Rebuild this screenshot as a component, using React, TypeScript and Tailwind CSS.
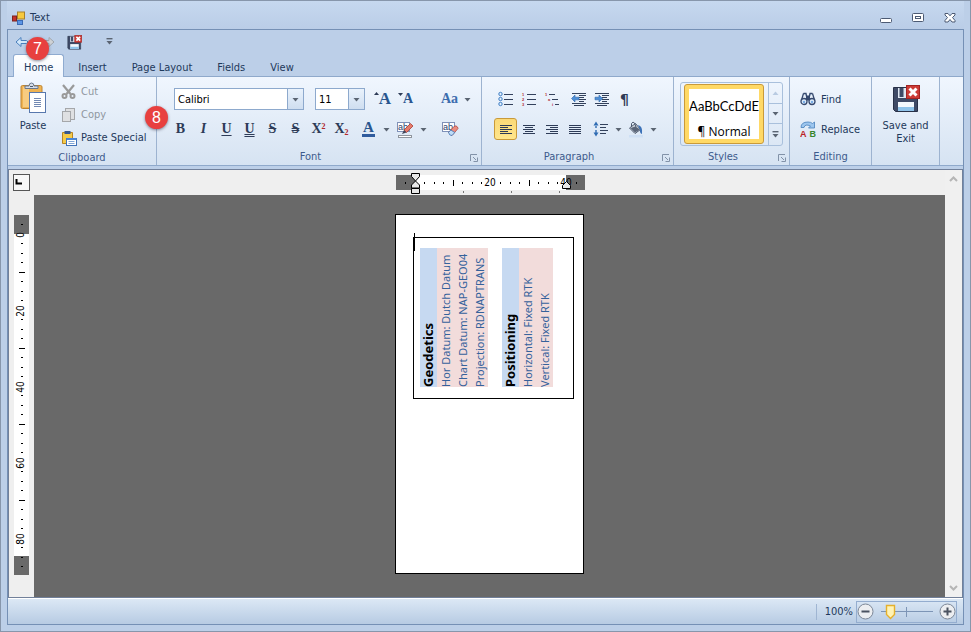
import React, { useState } from 'react';

const Caret: React.FC<{ up?: boolean; bar?: boolean; faint?: boolean }> = ({ up, bar, faint }) => (
  <svg width="7" height="8" viewBox="0 0 7 8" fill={faint ? '#b9cbe2' : '#5a6472'}>
    {bar && <path d="M0.5 0h6v1.4h-6z" />}
    <path d={up ? 'M0.5 6h6L3.5 2.5z' : 'M0.5 3h6L3.5 6.5z'} />
  </svg>
);

const AppIcon = () => (
  <svg width="14" height="14" viewBox="0 0 14 14">
    <rect x="5.5" y="1" width="7" height="7" fill="#f7c93e" stroke="#a9802a" />
    <rect x="0.5" y="5" width="4" height="5" fill="#c5322b" stroke="#7d2321" />
    <rect x="5.5" y="9.5" width="5" height="4" fill="#5c95e6" stroke="#3b6bb5" />
  </svg>
);

const HistoryArrow: React.FC<{ redo?: boolean }> = ({ redo }) => (
  <svg width="14" height="12" viewBox="0 0 14 12">
    <path
      d={redo ? 'M13 6L8 1.5v3H2.5L1 6l1.5 1.5H8v3z' : 'M1 6l5-4.5v3h5.5L13 6l-1.5 1.5H6v3z'}
      fill={redo ? '#cfd2d6' : '#d3e8fb'}
      stroke={redo ? '#9fa5ad' : '#4a80bd'}
    />
  </svg>
);

const SaveExitIcon: React.FC<{ size: number }> = ({ size }) => (
  <svg width={size} height={size} viewBox="0 0 28 28">
    <path d="M1.5 2.5h24v24h-22l-2-2z" fill="#3e4a66" stroke="#283148" />
    <rect x="6" y="3" width="13" height="10" fill="#dfe8f3" />
    <rect x="7.5" y="3" width="4" height="9" fill="#3e4a66" />
    <rect x="6" y="17" width="16" height="9" fill="#f3f8fd" />
    <rect x="6" y="22" width="16" height="4" fill="#8fc3ea" />
    <rect x="14.5" y="0.5" width="13" height="13" fill="#cc3b36" stroke="#a32422" />
    <path d="M17.5 3.5l7 7M24.5 3.5l-7 7" stroke="#fff" strokeWidth="3" />
  </svg>
);

const PasteIcon = () => (
  <svg width="26" height="32" viewBox="0 0 26 32">
    <rect x="1" y="3.5" width="21" height="23" rx="1.5" fill="#efb352" stroke="#bf8430" />
    <rect x="3" y="5" width="6" height="20" fill="#f8cc80" />
    <path d="M5 6.5V4h4a2.5 3 0 0 1 5 0h4v2.5z" fill="#d5dde8" stroke="#69778c" />
    <path d="M10 4.5h3" stroke="#4a576b" />
    <rect x="9.5" y="10.5" width="16" height="20" fill="#fff" stroke="#5878ad" />
    <path d="M14 16.5h7M14 18.5h7M14 20.5h7M14 22.5h7M14 24.5h7" stroke="#7289b3" />
  </svg>
);

const CutIcon = () => (
  <svg width="15" height="15" viewBox="0 0 15 15" fill="none" stroke="#999">
    <path d="M2 1l7.5 9M13 1L5.5 10" strokeWidth="2.2" />
    <circle cx="3.5" cy="12" r="2" strokeWidth="2" />
    <circle cx="11.5" cy="12" r="2" strokeWidth="2" />
  </svg>
);

const CopyIcon = () => (
  <svg width="15" height="16" viewBox="0 0 15 16" fill="#dfe0e2" stroke="#a5a7aa">
    <rect x="4.5" y="1.5" width="9" height="11" />
    <rect x="1.5" y="4.5" width="8" height="10" />
  </svg>
);

const PasteSpecialIcon = () => (
  <svg width="16" height="16" viewBox="0 0 16 16">
    <path d="M1.5 2.5h10v11h-10z" fill="#f5cb48" stroke="#b88521" />
    <path d="M3.5 1h6v3h-6z" fill="#36588f" />
    <rect x="5.5" y="8.5" width="10" height="7" fill="#fff" stroke="#4272b8" />
    <path d="M5.5 9h10" stroke="#4b86d6" strokeWidth="2" />
    <path d="M7.5 11.5h6M7.5 13.5h6" stroke="#7fa5d6" />
  </svg>
);

const ListIcon: React.FC<{ kind: 'bullet' | 'number' | 'multi' }> = ({ kind }) => (
  <svg width="16" height="16" viewBox="0 0 16 16" fontFamily="Liberation Sans" fontWeight="bold" fontSize="4" fill="#b0282a">
    {kind === 'multi' ? (
      <>
        <path d="M5 3.5h6M8 8.5h6M11 13.5h4" stroke="#33415c" />
        <text x="1" y="5">1</text>
        <text x="4" y="10">a</text>
        <text x="8" y="15">i</text>
      </>
    ) : (
      <>
        <path d="M6 3.5h9M6 8.5h9M6 13.5h9" stroke="#33415c" />
        {[3, 8, 13].map((y, i) =>
          kind === 'bullet' ? (
            <circle key={y} cx="2.5" cy={y} r="1.7" fill="#e4f1fd" stroke="#3d7dc4" />
          ) : (
            <text key={y} x="1" y={y + 2}>{i + 1}</text>
          )
        )}
      </>
    )}
  </svg>
);

const IndentIcon: React.FC<{ more?: boolean }> = ({ more }) => (
  <svg width="16" height="14" viewBox="0 0 16 14">
    <path d="M1 1.5h14M8 3.5h7M8 5.5h5M8 7.5h7M8 9.5h5M1 11.5h14M3 13.5h10" stroke="#33415c" />
    <path d={more ? 'M8.5 6.5L5 3v2.2H1v2.6h4V10z' : 'M0.5 6.5L4 3v2.2h4v2.6H4V10z'} fill="#4d8fd8" stroke="#2c65a8" strokeWidth="0.6" />
  </svg>
);

const alignPaths: Record<string, string> = {
  Left: 'M1 1.5h12M1 3.5h8M1 5.5h12M1 7.5h8M1 9.5h12',
  Center: 'M1 1.5h12M3 3.5h8M1 5.5h12M3 7.5h8M1 9.5h12',
  Right: 'M1 1.5h12M5 3.5h8M1 5.5h12M5 7.5h8M1 9.5h12',
  Justify: 'M1 1.5h12M1 3.5h12M1 5.5h12M1 7.5h12M1 9.5h12',
};

const SpacingIcon = () => (
  <svg width="16" height="16" viewBox="0 0 16 16">
    <path d="M7 3.5h8M7 6.5h6M7 9.5h8M7 12.5h6" stroke="#33415c" />
    <path d="M3 0.5L0.5 4.5h5zM3 15.5l-2.5-4h5zM2.3 4h1.4v3H2.3zM2.3 9h1.4v3H2.3z" fill="#2f6cb3" />
  </svg>
);

const BucketIcon = () => (
  <svg width="16" height="17" viewBox="0 0 16 17">
    <path d="M1 14h14v2.5H1z" fill="#cfe0f5" />
    <path d="M1.5 7L7.5 2.5l5 6L7 12.5z" fill="#cdd3db" stroke="#4e5a6e" />
    <path d="M2.5 7l5-1.5 4.5 3L7 11.5z" fill="#5a6578" />
    <path d="M3.5 5V2.5Q5 0 6.5 2L8 6" fill="none" stroke="#4e5a6e" />
    <path d="M10 4q5 1 4 9-2.5-1-2-4z" fill="#3d72b8" />
  </svg>
);

const FindIcon = () => (
  <svg width="16" height="14" viewBox="0 0 16 14" fill="#d6e7f8" stroke="#36496e">
    <path d="M3.5 1.5h2.5l1 5M12.5 1.5H10l-1 5M3.5 1.5L1.5 8M12.5 1.5l2 6.5" strokeWidth="1.3" />
    <path d="M6.5 4h3v4h-3z" fill="#36496e" />
    <circle cx="4" cy="9.5" r="3" strokeWidth="1.3" />
    <circle cx="12" cy="9.5" r="3" strokeWidth="1.3" />
    <path d="M4 9v2M12 9v2" stroke="#5b9be0" strokeWidth="1.5" />
  </svg>
);

const ReplaceIcon = () => (
  <svg width="16" height="16" viewBox="0 0 16 16" fontFamily="Liberation Sans" fontWeight="bold" fontSize="9">
    <path d="M1 6.5q0-5.5 7-5.5 3 0 4.5 1.5L14.5 1v6h-6l2-2Q5 2.5 4 6.5z" fill="#9cc5ee" stroke="#4880bb" strokeWidth="0.8" />
    <text x="0" y="15.5" fill="#bb2126">A</text>
    <text x="9.5" y="15.5" fill="#38852d">B</text>
  </svg>
);

const AbIcon: React.FC<{ eraser?: boolean }> = ({ eraser }) => (
  <svg width="17" height="17" viewBox="0 0 17 17">
    <rect x="0.5" y="1.5" width="12" height="9" fill="#fff" stroke="#7f91b8" />
    <text x="1" y="9" fontFamily="Liberation Sans" fontSize="9" fontWeight="normal" fill="#27406e">ab</text>
    {eraser ? (
      <>
        <path d="M6.5 11.5l5.5-6q2-1.5 3.5.5l.5 1.5-6 7z" fill="#eb8d80" stroke="#b14a42" strokeWidth="0.8" />
        <path d="M6.5 11.5l2.3-2.5 4 2.5-2.8 3q-2.5.5-3.5-3z" fill="#bfdcf7" stroke="#3f75b5" strokeWidth="0.8" />
      </>
    ) : (
      <>
        <path d="M7 9l6.5-6.5 2.5 2.5-6.5 6.5z" fill="#e67a6a" stroke="#a83e35" strokeWidth="0.8" />
        <path d="M7 9l2.5 2.5-4.5 1.5z" fill="#41475a" />
        <rect x="1.5" y="14.5" width="13" height="2" fill="#fff" stroke="#8f959e" />
      </>
    )}
  </svg>
);

const Tool: React.FC<{ label: string; active?: boolean; onClick?: () => void; children: React.ReactNode }> = ({ label, active, onClick, children }) => (
  <button
    aria-label={label}
    onClick={onClick}
    className={`flex h-[22px] w-[23px] shrink-0 items-center justify-center rounded-[3px] border font-[Liberation_Serif,serif] text-[14px] leading-4 font-bold text-[#2d3b57] ${
      active ? 'border-[#c99a3a] bg-gradient-to-b from-[#fbd977] to-[#ffe68c]' : 'border-transparent'
    }`}
  >
    {children}
  </button>
);

const MoreButton: React.FC<{ label: string }> = ({ label }) => (
  <button aria-label={label} className="flex h-[22px] w-3 shrink-0 items-center justify-center">
    <Caret />
  </button>
);

const Combo: React.FC<{ label: string; value: string; options: string[]; className: string }> = ({ label, value, options, className }) => (
  <div className={`relative h-[22px] border border-[#8da9cd] bg-white ${className}`}>
    <select aria-label={label} defaultValue={value} className="h-full w-full appearance-none bg-transparent pl-[3px] text-black outline-none">
      {options.map((o) => <option key={o}>{o}</option>)}
    </select>
    <span className="pointer-events-none absolute inset-y-0 right-0 flex w-4 items-center justify-center border-l border-[#8da9cd] bg-gradient-to-b from-[#e9f2fc] to-[#cfdef0]">
      <Caret />
    </span>
  </div>
);

const Group: React.FC<{ title?: string; launcher?: boolean; className: string; children?: React.ReactNode }> = ({ title, launcher, className, children }) => (
  <section className={`flex shrink-0 flex-col border-r border-[#9db3d0] ${className}`}>
    <div className="flex-1">{children}</div>
    {title && (
      <div className={`relative h-[17px] text-center leading-[18px] text-[#3d5a8c] ${launcher ? 'pr-[17px]' : ''}`}>
        {title}
        {launcher && (
          <button aria-label={`${title} settings`} className="absolute right-[3px] bottom-[3px]">
            <svg width="8" height="8" viewBox="0 0 8 8" fill="none" stroke="#8292a8" className="block">
              <path d="M0.5 7V0.5H7M3 3l3 3M7.5 3.5v4h-4" />
            </svg>
          </button>
        )}
      </div>
    )}
  </section>
);

const STEP = 9.5;

const Ruler: React.FC<{ length: number; last: number; vertical?: boolean }> = ({ length, last, vertical }) => {
  const ticks = Array.from({ length: last + 2 }, (_, i) => i - 1);
  const w = vertical ? 15 : length;
  const h = vertical ? length : 18;
  return (
    <svg width={w} height={h} viewBox={`0 0 ${w} ${h}`} className="shrink-0" fontFamily="DejaVu Sans Condensed, Noto Sans, sans-serif" fontSize="10" textAnchor="middle">
      <g transform={vertical ? 'matrix(0 1 1 0 0 0)' : undefined}>
        <rect width={length} height="15" fill="#fff" />
        <rect width="19" height="15" fill="#696969" />
        <rect x={length - 19} width="19" height="15" fill="#696969" />
        {ticks.filter((k) => k % 8 !== 0).map((k) => (
          <rect key={k} x={Math.floor(19 + k * STEP)} y={k % 4 === 0 ? 5 : 7} width="1" height={k % 4 === 0 ? 6 : 2} fill="#000" />
        ))}
      </g>
      {/* default tab stops */}
      {!vertical && [67, 115, 163].map((x) => <rect key={x} x={x} y="16" width="1" height="2" fill="#777" />)}
      {ticks.filter((k) => k % 8 === 0 && (vertical || k > 0)).map((k) => {
        const p = 19 + k * STEP;
        return vertical ? (
          <text key={k} transform={`translate(10 ${p + 1}) rotate(-90)`}>{k * 2.5}</text>
        ) : (
          <text key={k} x={p - 1} y="11">{k * 2.5}</text>
        );
      })}
    </svg>
  );
};

const IndentMarkers = () => (
  <svg width="189" height="22" viewBox="0 0 189 22" className="pointer-events-none absolute top-[3px] left-0" fill="#e8e8e8" stroke="#000">
    <path d="M15.5 0.5h8v3l-4 4.5 4 4v3h-8v-3l4-4-4-4.5zM15.5 15.5h8v5h-8z" />
    <path d="M166.5 15.5v-3l4-4 4 4v3z" />
  </svg>
);

const blocks = [
  { title: 'Geodetics', lines: ['Hor Datum: Dutch Datum', 'Chart Datum: NAP-GEO04', 'Projection: RDNAPTRANS'] },
  { title: 'Positioning', lines: ['Horizontal: Fixed RTK', 'Vertical: Fixed RTK'] },
];

const Callout: React.FC<{ className: string; children: React.ReactNode }> = ({ className, children }) => (
  <span className={`absolute z-10 flex size-[23px] items-center justify-center rounded-full bg-[#e8403f] font-[Liberation_Sans,sans-serif] text-base text-white shadow-[0_1px_3px_rgba(60,60,80,0.6)] ${className}`}>
    {children}
  </span>
);

const tabs = ['Home', 'Insert', 'Page Layout', 'Fields', 'View'];

export default function App() {
  const [tab, setTab] = useState('Home');
  const [align, setAlign] = useState('Left');

  return (
    <div className="relative flex h-screen min-h-[400px] flex-col overflow-hidden border border-[#8796ab] bg-[#bccfe8] px-[6px] pb-[6px] font-[DejaVu_Sans_Condensed,Noto_Sans,sans-serif] text-[11px] leading-[13px] text-[#1e395b]">
      <header className="flex h-7 shrink-0 items-center bg-gradient-to-b from-[#c6d8ef] to-[#bacde7] pt-[5px] pr-[7px] pl-[5px]">
        <AppIcon />
        <h1 className="ml-1 flex-1">Text</h1>
        <div className="flex items-center gap-[18px]">
          <button aria-label="Minimize">
            <svg width="14" height="14" viewBox="0 0 14 14"><rect x="1.5" y="7.5" width="11" height="4" rx="1" fill="#fff" stroke="#4c5a73" /></svg>
          </button>
          <button aria-label="Maximize">
            <svg width="14" height="14" viewBox="0 0 14 14" fill="#fff" stroke="#4c5a73"><rect x="1.5" y="2.5" width="11" height="8" rx="1" /><rect x="4.5" y="5.5" width="5" height="2" /></svg>
          </button>
          <button aria-label="Close">
            <svg width="14" height="14" viewBox="0 0 14 14"><path d="M2 2.5h3l2 2.3 2-2.3h3v1.5L9.5 6.5 12 9.5V11H9L7 8.5 5 11H2V9.5l2.5-3L2 4z" fill="#fff" stroke="#4c5a73" /></svg>
          </button>
        </div>
      </header>

      <div className="flex min-h-0 flex-1 flex-col border border-[#7590b5]">
        <div className="flex h-6 shrink-0 items-center pl-[7px]">
          <button aria-label="Undo"><HistoryArrow /></button>
          <button aria-label="Redo" className="ml-3"><HistoryArrow redo /></button>
          <button aria-label="Save and exit" className="ml-3"><SaveExitIcon size={15} /></button>
          <button aria-label="Customize toolbar" className="ml-6"><Caret bar /></button>
        </div>

        <nav role="tablist" className="flex h-[22px] shrink-0 gap-[3px] pl-[5px]">
          {tabs.map((t) => (
            <button
              key={t}
              role="tab"
              aria-selected={t === tab}
              onClick={() => setTab(t)}
              className={`relative -mb-px rounded-t-[3px] border border-b-0 px-[10px] pt-[2px] ${
                t === tab ? 'z-[1] border-[#8fabd0] bg-gradient-to-b from-white to-[#f0f6fe]' : 'border-transparent'
              }`}
            >
              {t}
            </button>
          ))}
        </nav>

        <div className="flex h-[90px] shrink-0 overflow-hidden border-y border-[#8fa9cb] bg-gradient-to-b from-[#f0f6fe] to-[#d6e3f2]">
          <Group title="Clipboard" className="w-[149px]">
            <div className="flex pt-[3px] pl-[9px]">
              <button className="flex w-8 flex-col items-center gap-[5px] pt-[2px]">
                <PasteIcon />
                <span>Paste</span>
              </button>
              <div className="ml-3 flex flex-col">
                <button disabled className="flex h-[23px] items-center gap-[5px] text-[#8f979f]"><CutIcon />Cut</button>
                <button disabled className="flex h-[23px] items-center gap-[5px] text-[#8f979f]"><CopyIcon />Copy</button>
                <button className="flex h-[23px] items-center gap-1 whitespace-nowrap"><PasteSpecialIcon />Paste Special</button>
              </div>
            </div>
          </Group>

          <Group title="Font" launcher className="w-[325px]">
            <div className="flex items-center pt-[11px] pl-[17px]">
              <Combo label="Font name" value="Calibri" options={['Calibri', 'Arial', 'Tahoma']} className="w-[130px]" />
              <Combo label="Font size" value="11" options={['9', '10', '11', '12', '14']} className="ml-[11px] w-[50px]" />
              <div className="ml-[6px] flex">
                <Tool label="Grow font"><span className="flex text-[17px] text-[#29568f]"><svg width="5" height="6" viewBox="0 0 5 6"><path d="M0 4h5L2.5 1z" fill="#2d3b57" /></svg>A</span></Tool>
                <Tool label="Shrink font"><span className="flex text-[14px] text-[#29568f]"><svg width="5" height="6" viewBox="0 0 5 6"><path d="M0 2h5L2.5 5z" fill="#2d3b57" /></svg>A</span></Tool>
              </div>
              <div className="ml-[21px] flex">
                <Tool label="Change case"><span className="text-[14px] text-[#3c6dae]">Aa</span></Tool>
                <MoreButton label="Change case options" />
              </div>
            </div>
            <div className="flex pt-2 pl-3">
              <Tool label="Bold">B</Tool>
              <Tool label="Italic"><i>I</i></Tool>
              <Tool label="Underline"><span className="underline underline-offset-2">U</span></Tool>
              <Tool label="Double underline"><span className="underline decoration-double underline-offset-1">U</span></Tool>
              <Tool label="Strikethrough"><s>S</s></Tool>
              <Tool label="Double strikethrough"><s className="decoration-double">S</s></Tool>
              <Tool label="Superscript"><span>X<sup className="text-[8px] text-[#b0282a]">2</sup></span></Tool>
              <Tool label="Subscript"><span>X<sub className="text-[8px] text-[#b0282a]">2</sub></span></Tool>
              <div className="ml-1 flex">
                <Tool label="Font color"><span className="border-b-[3px] border-[#2f5b9d] px-[1px] text-[15px] leading-[13px] text-[#29568f]">A</span></Tool>
                <MoreButton label="Font color options" />
              </div>
              <div className="ml-[2px] flex">
                <Tool label="Highlight"><AbIcon /></Tool>
                <MoreButton label="Highlight options" />
              </div>
              <div className="ml-[10px]"><Tool label="Clear formatting"><AbIcon eraser /></Tool></div>
            </div>
          </Group>

          <Group title="Paragraph" launcher className="w-[192px]">
            <div className="flex pt-[11px] pl-3">
              <Tool label="Bullets"><ListIcon kind="bullet" /></Tool>
              <Tool label="Numbering"><ListIcon kind="number" /></Tool>
              <Tool label="Multilevel list"><ListIcon kind="multi" /></Tool>
              <div className="ml-1 flex">
                <Tool label="Decrease indent"><IndentIcon /></Tool>
                <Tool label="Increase indent"><IndentIcon more /></Tool>
                <Tool label="Show marks"><span className="font-[DejaVu_Sans,sans-serif]">¶</span></Tool>
              </div>
            </div>
            <div className="flex pt-2 pl-3">
              {Object.keys(alignPaths).map((a) => (
                <Tool key={a} label={`Align ${a}`} active={a === align} onClick={() => setAlign(a)}>
                  <svg width="14" height="11" viewBox="0 0 14 11"><path d={alignPaths[a]} stroke="#2d3b57" /></svg>
                </Tool>
              ))}
              <div className="ml-[3px] flex">
                <Tool label="Line spacing"><SpacingIcon /></Tool>
                <MoreButton label="Line spacing options" />
                <Tool label="Shading"><BucketIcon /></Tool>
                <MoreButton label="Shading options" />
              </div>
            </div>
          </Group>

          <Group title="Styles" launcher className="w-[116px]">
            <div className="mt-[5px] ml-[6px] flex h-[64px] w-[103px] rounded-[3px] border border-[#a9c0dc]">
              <button className="m-[1px] ml-[3px] flex w-20 flex-col items-center rounded-[3px] border border-[#c99a3a] bg-[#ffd966] p-1 font-[Open_Sans,sans-serif] text-black">
                <span className="flex w-full flex-1 flex-col items-center justify-between overflow-hidden bg-white pt-[10px] text-[12px] leading-[14px]">
                  <span className="font-[Lato,sans-serif] text-[13px]">AaBbCcDdE</span>
                  <span>¶ Normal</span>
                </span>
              </button>
              <div className="ml-auto grid w-[14px] grid-rows-3 divide-y divide-[#a9c0dc] border-l border-[#a9c0dc]">
                <button aria-label="Previous styles" className="flex items-center justify-center"><Caret up faint /></button>
                <button aria-label="Next styles" className="flex items-center justify-center"><Caret /></button>
                <button aria-label="More styles" className="flex items-center justify-center"><Caret bar /></button>
              </div>
            </div>
          </Group>

          <Group title="Editing" className="w-[82px]">
            <div className="flex flex-col gap-2 pt-[11px] pl-[10px]">
              <button className="flex h-[22px] items-center gap-[5px]"><FindIcon />Find</button>
              <button className="flex h-[22px] items-center gap-[5px]"><ReplaceIcon />Replace</button>
            </div>
          </Group>

          <Group className="w-[68px]">
            <button className="flex w-full flex-col items-center gap-[6px] pt-2">
              <SaveExitIcon size={28} />
              <span className="w-14">Save and Exit</span>
            </button>
          </Group>
        </div>

        <main className="mt-[3px] grid min-h-0 flex-1 grid-cols-[25px_1fr_17px] grid-rows-[25px_1fr] border border-[#71809a] bg-[#efefef]">
          <button aria-label="Tab stop" className="mt-1 ml-1 size-[17px] border border-[#555] bg-[#f7f7f7]">
            <svg width="15" height="15" viewBox="0 0 15 15"><path d="M2.5 4v4.5H8" fill="none" stroke="#000" strokeWidth="2" /></svg>
          </button>
          <div className="flex justify-center pl-[2px]">
            <div className="relative pt-[5px]">
              <Ruler length={189} last={17} />
              <IndentMarkers />
            </div>
          </div>
          <div className="row-span-2 flex flex-col items-center justify-between bg-[#f0f0f0] py-[5px]">
            <button aria-label="Scroll up">
              <svg width="9" height="8" viewBox="0 0 9 8" fill="none" stroke="#b5b5b5" strokeWidth="2"><path d="M1 6l3.5-3.5L8 6" /></svg>
            </button>
            <button aria-label="Scroll down">
              <svg width="9" height="8" viewBox="0 0 9 8" fill="none" stroke="#b5b5b5" strokeWidth="2"><path d="M1 2l3.5 3.5L8 2" /></svg>
            </button>
          </div>
          <div className="overflow-hidden pt-5 pl-[5px]"><Ruler length={360} last={35} vertical /></div>
          <div className="flex justify-center overflow-hidden bg-[#696969] pt-[19px]">
            <article className="h-[360px] w-[189px] shrink-0 border border-black bg-white pt-[22px] pl-[17px]">
              <div className="relative flex h-[162px] w-[161px] gap-[14px] border border-black pt-[10px] pl-[6px]">
                <span className="absolute -top-[5px] left-0 h-[18px] w-px bg-black" />
                {blocks.map((b) => (
                  <div key={b.title} className="h-[139px] rotate-180 font-[Noto_Sans,sans-serif] text-[11px] leading-[17px] whitespace-nowrap text-[#35629b] [writing-mode:vertical-rl]">
                    <h2 className="bg-[#c6d9f1] text-[13px] leading-[17px] font-bold text-black">{b.title}</h2>
                    {b.lines.map((line) => <p key={line} className="bg-[#f2dcdb]">{line}</p>)}
                  </div>
                ))}
              </div>
            </article>
          </div>
        </main>

        <footer className="flex h-[26px] shrink-0 items-center justify-end border-t border-white bg-gradient-to-b from-[#dce8f5] to-[#b7cbe3] pr-[6px]">
          <span className="mr-2 h-4 w-px bg-[#9fb5d2]" />
          <label htmlFor="zoom">100%</label>
          <div className="ml-[3px] flex h-[22px] w-[101px] items-center justify-between border border-[#94adcf]">
            <button aria-label="Zoom out">
              <svg width="17" height="17" viewBox="0 0 17 17"><circle cx="8.5" cy="8.5" r="7.5" fill="#eceef1" stroke="#7c8797" /><path d="M4.5 8.5h8" stroke="#4b5361" strokeWidth="2" /></svg>
            </button>
            <div className="relative h-[18px] w-[54px]">
              <svg width="54" height="18" viewBox="0 0 54 18">
                <path d="M1 8.5h52M26.5 4v10" stroke="#7d95b6" />
                <path d="M6.5 2.5h8v9l-4 4-4-4z" fill="#fff3b5" stroke="#e5b02c" strokeWidth="1.4" />
              </svg>
              <input id="zoom" type="range" min="10" max="500" defaultValue="100" className="absolute inset-0 h-full w-full opacity-0" />
            </div>
            <button aria-label="Zoom in">
              <svg width="17" height="17" viewBox="0 0 17 17"><circle cx="8.5" cy="8.5" r="7.5" fill="#eceef1" stroke="#7c8797" /><path d="M4.5 8.5h8M8.5 4.5v8" stroke="#4b5361" strokeWidth="2" /></svg>
            </button>
          </div>
        </footer>
      </div>

      <Callout className="top-9 left-[25px]">7</Callout>
      <Callout className="top-[105px] left-36">8</Callout>
    </div>
  );
}
